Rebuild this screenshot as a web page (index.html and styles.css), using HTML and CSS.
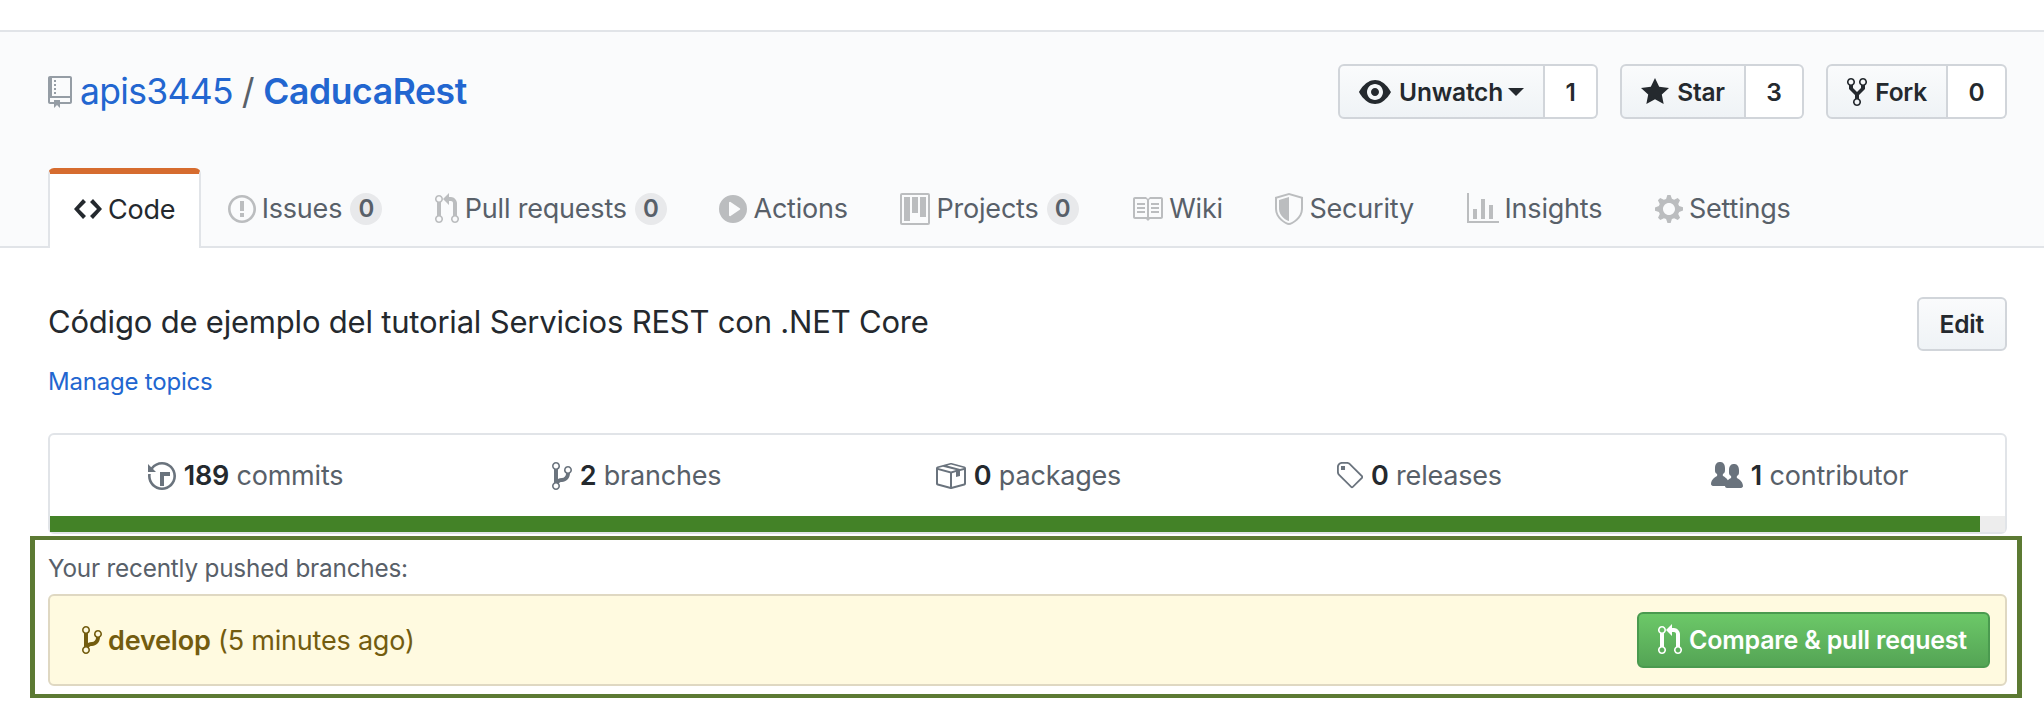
FILE: index.html
```html
<!DOCTYPE html>
<html>
  <head>
    <title>apis3445/CaducaRest</title>
    <link rel="stylesheet" href="styles.css">
  </head>

  <body>
    <div class="top-strip"></div>

    <div class="repohead">
      <div class="title-row">
        <h1 class="repo-title">
          <svg class="icon icon-repo" viewBox="0 0 12 16"><path d="M4 9H3V8h1v1zm0-3H3v1h1V6zm0-2H3v1h1V4zm0-2H3v1h1V2zm8-1v12c0 .55-.45 1-1 1H6v2l-1.5-1.5L3 16v-2H1c-.55 0-1-.45-1-1V1c0-.55.45-1 1-1h10c.55 0 1 .45 1 1zm-1 10H1v2h2v-1h3v1h5v-2zm0-10H2v9h9V1z"/></svg>
          <a class="owner" href="#">apis3445</a>
          <span class="slash">/</span>
          <a class="repo" href="#">CaducaRest</a>
        </h1>
        <div class="actions">
          <div class="btn-group">
            <button class="btn btn-main">
              <svg class="icon icon-16" viewBox="0 0 16 16"><path d="M8.06 2C3 2 0 8 0 8s3 6 8.06 6C13 14 16 8 16 8s-3-6-7.94-6zM8 12c-2.2 0-4-1.78-4-4 0-2.2 1.8-4 4-4 2.22 0 4 1.8 4 4 0 2.22-1.78 4-4 4zm2-4c0 1.11-.89 2-2 2-1.11 0-2-.89-2-2 0-1.11.89-2 2-2 1.11 0 2 .89 2 2z"/></svg>
              Unwatch <span class="caret"></span>
            </button>
            <a class="btn-count" href="#">1</a>
          </div>
          <div class="btn-group">
            <button class="btn btn-main">
              <svg class="icon icon-14" viewBox="0 0 14 16"><path d="M14 6l-4.9-.64L7 1 4.9 5.36 0 6l3.6 3.26L2.67 14 7 11.67 11.33 14l-.93-4.74L14 6z"/></svg>
              Star
            </button>
            <a class="btn-count" href="#">3</a>
          </div>
          <div class="btn-group">
            <button class="btn btn-main">
              <svg class="icon icon-10" viewBox="0 0 10 16"><path d="M8 1a1.993 1.993 0 00-1 3.72V6L5 8 3 6V4.72A1.993 1.993 0 002 1a1.993 1.993 0 00-1 3.72V6.5l3 3v1.78A1.993 1.993 0 005 15a1.993 1.993 0 001-3.72V9.5l3-3V4.72A1.993 1.993 0 008 1zM2 4.2C1.34 4.2.8 3.65.8 3c0-.65.55-1.2 1.2-1.2.65 0 1.2.55 1.2 1.2 0 .65-.55 1.2-1.2 1.2zm3 10c-.66 0-1.2-.55-1.2-1.2 0-.65.55-1.2 1.2-1.2.65 0 1.2.55 1.2 1.2 0 .65-.55 1.2-1.2 1.2zm3-10c-.66 0-1.2-.55-1.2-1.2 0-.65.55-1.2 1.2-1.2.65 0 1.2.55 1.2 1.2 0 .65-.55 1.2-1.2 1.2z"/></svg>
              Fork
            </button>
            <a class="btn-count" href="#">0</a>
          </div>
        </div>
      </div>

      <nav class="tabs">
        <a class="tab selected" href="#">
          <svg class="icon icon-14 tab-icon" viewBox="0 0 14 16"><path d="M9.5 3L8 4.5 11.5 8 8 11.5 9.5 13 14 8 9.5 3zm-5 0L0 8l4.5 5L6 11.5 2.5 8 6 4.5 4.5 3z"/></svg>
          Code
        </a>
        <a class="tab" href="#">
          <svg class="icon icon-14 tab-icon" viewBox="0 0 14 16"><path d="M7 2.3c3.14 0 5.7 2.56 5.7 5.7s-2.56 5.7-5.7 5.7A5.71 5.71 0 011.3 8c0-3.14 2.56-5.7 5.7-5.7zM7 1C3.14 1 0 4.14 0 8s3.14 7 7 7 7-3.14 7-7-3.14-7-7-7zm1 3H6v5h2V4zm0 6H6v2h2v-2z"/></svg>
          Issues <span class="counter">0</span>
        </a>
        <a class="tab" href="#">
          <svg class="icon icon-12 tab-icon" viewBox="0 0 12 16"><path d="M11 11.28V5c-.03-.78-.34-1.47-.94-2.06C9.46 2.35 8.78 2.03 8 2H7V0L4 3l3 3V4h1c.27.02.48.11.69.31.21.2.3.42.31.69v6.28A1.993 1.993 0 0010 15a1.993 1.993 0 001-3.72zm-1 2.92c-.66 0-1.2-.55-1.2-1.2 0-.65.55-1.2 1.2-1.2.65 0 1.2.55 1.2 1.2 0 .65-.55 1.2-1.2 1.2zM4 3c0-1.11-.89-2-2-2a1.993 1.993 0 00-1 3.72v6.56A1.993 1.993 0 002 15a1.993 1.993 0 001-3.72V4.72c.59-.34 1-.98 1-1.72zm-.8 10c0 .66-.55 1.2-1.2 1.2-.65 0-1.2-.55-1.2-1.2 0-.65.55-1.2 1.2-1.2.65 0 1.2.55 1.2 1.2zM2 4.2C1.34 4.2.8 3.65.8 3c0-.65.55-1.2 1.2-1.2.65 0 1.2.55 1.2 1.2 0 .65-.55 1.2-1.2 1.2z"/></svg>
          Pull requests <span class="counter">0</span>
        </a>
        <a class="tab" href="#">
          <svg class="icon icon-14 tab-icon" viewBox="0 0 14 16"><path d="M14 8A7 7 0 110 8a7 7 0 0114 0zm-8.223 3.482l4.599-3.066a.5.5 0 000-.832L5.777 4.518A.5.5 0 005 4.934v6.132a.5.5 0 00.777.416z"/></svg>
          Actions
        </a>
        <a class="tab" href="#">
          <svg class="icon icon-15 tab-icon" viewBox="0 0 15 16"><path d="M10 12h3V2h-3v10zm-4-2h3V2H6v8zm-4 4h3V2H2v12zm-1 1h13V1H1v14zM14 0H1a1 1 0 00-1 1v14a1 1 0 001 1h13a1 1 0 001-1V1a1 1 0 00-1-1z"/></svg>
          Projects <span class="counter">0</span>
        </a>
        <a class="tab" href="#">
          <svg class="icon icon-16 tab-icon" viewBox="0 0 16 16"><path d="M3 5h4v1H3V5zm0 3h4V7H3v1zm0 2h4V9H3v1zm11-5h-4v1h4V5zm0 2h-4v1h4V7zm0 2h-4v1h4V9zm2-6v9c0 .55-.45 1-1 1H9.5l-1 1-1-1H2c-.55 0-1-.45-1-1V3c0-.55.45-1 1-1h5.5l1 1 1-1H15c.55 0 1 .45 1 1zm-8 .5L7.5 3H2v9h6V3.5zm7-.5H9.5l-.5.5V12h6V3z"/></svg>
          Wiki
        </a>
        <a class="tab" href="#">
          <svg class="icon icon-14 tab-icon" viewBox="0 0 14 16"><path d="M0 2l7-2 7 2v6.02C14 12.69 8.69 16 7 16c-1.69 0-7-3.31-7-7.98V2zm1 .75L7 1l6 1.75v5.268C13 12.104 8.449 15 7 15c-1.449 0-6-2.896-6-6.982V2.75zm1 .75L7 2v12c-1.207 0-5-2.482-5-5.985V3.5z"/></svg>
          Security
        </a>
        <a class="tab" href="#">
          <svg class="icon icon-16 tab-icon" viewBox="0 0 16 16"><path d="M16 14v1H0V0h1v14h15zM5 13H3V8h2v5zm4 0H7V3h2v10zm4 0h-2V6h2v7z"/></svg>
          Insights
        </a>
        <a class="tab" href="#">
          <svg class="icon icon-14 tab-icon" viewBox="0 0 14 16"><path d="M14 8.77v-1.6l-1.94-.64-.45-1.09.88-1.84-1.13-1.13-1.81.91-1.09-.45-.69-1.92h-1.6l-.63 1.94-1.11.45-1.84-.88-1.13 1.13.91 1.81-.45 1.09L0 7.23v1.59l1.94.64.45 1.09-.88 1.84 1.13 1.13 1.81-.91 1.09.45.69 1.92h1.59l.63-1.94 1.11-.45 1.84.88 1.13-1.13-.92-1.81.47-1.09L14 8.75v.02zM7 11c-1.66 0-3-1.34-3-3s1.34-3 3-3 3 1.34 3 3-1.34 3-3 3z"/></svg>
          Settings
        </a>
      </nav>
    </div>

    <div class="container">
      <div class="description">
        <span class="description-text">Código de ejemplo del tutorial Servicios REST con .NET Core</span>
        <button class="btn btn-edit">Edit</button>
      </div>
      <a class="manage-topics" href="#">Manage topics</a>

      <div class="stats-box">
        <ul class="stats">
          <li>
            <svg class="icon icon-14" viewBox="0 0 14 16"><path d="M8 13H6V6h5v2H8v5zM7 1C4.81 1 2.87 2.02 1.59 3.59L0 2v4h4L2.5 4.5C3.55 3.17 5.17 2.3 7 2.3c3.14 0 5.7 2.56 5.7 5.7s-2.56 5.7-5.7 5.7A5.71 5.71 0 011.3 8c0-.34.03-.67.09-1H.08C.03 7.33 0 7.66 0 8c0 3.86 3.14 7 7 7s7-3.14 7-7-3.14-7-7-7z"/></svg>
            <span><strong>189</strong> commits</span>
          </li>
          <li>
            <svg class="icon icon-10" viewBox="0 0 10 16"><path d="M10 5c0-1.11-.89-2-2-2a1.993 1.993 0 00-1 3.72v.3c-.02.52-.23.98-.63 1.38-.4.4-.86.61-1.38.63-.83.02-1.48.16-2 .45V4.72a1.993 1.993 0 00-1-3.72C.88 1 0 1.89 0 3a2 2 0 001 1.72v6.56c-.59.35-1 .99-1 1.72 0 1.11.89 2 2 2 1.11 0 2-.89 2-2 0-.53-.2-1-.53-1.36.09-.06.48-.41.59-.47.25-.11.56-.17.94-.17 1.05-.05 1.95-.45 2.75-1.25S8.95 7.77 9 6.73h-.02C9.59 6.37 10 5.73 10 5zM2 1.8c.66 0 1.2.55 1.2 1.2 0 .65-.55 1.2-1.2 1.2C1.35 4.2.8 3.65.8 3c0-.65.55-1.2 1.2-1.2zm0 12.41c-.66 0-1.2-.55-1.2-1.2 0-.65.55-1.2 1.2-1.2.65 0 1.2.55 1.2 1.2 0 .65-.55 1.2-1.2 1.2zm6-8c-.66 0-1.2-.55-1.2-1.2 0-.65.55-1.2 1.2-1.2.65 0 1.2.55 1.2 1.2 0 .65-.55 1.2-1.2 1.2z"/></svg>
            <span><strong>2</strong> branches</span>
          </li>
          <li>
            <svg class="icon icon-16" viewBox="0 0 16 16"><path d="M1 4.27v7.47c0 .45.3.84.75.97l6.5 1.73c.16.05.34.05.5 0l6.5-1.73c.45-.13.75-.52.75-.97V4.27c0-.45-.3-.84-.75-.97l-6.5-1.74a1.4 1.4 0 00-.5 0L1.75 3.3c-.45.13-.75.52-.75.97zm7 9.09l-6-1.59V5l6 1.61v6.75zM2 4l2.5-.67L11 5.06l-2.5.67L2 4zm13 7.77l-6 1.59V6.61l2-.55V8.5l2-.53V5.53L15 5v6.77zm-2-7.24L6.5 2.8l2-.53L15 4l-2 .53z"/></svg>
            <span><strong>0</strong> packages</span>
          </li>
          <li>
            <svg class="icon icon-14" viewBox="0 0 14 16"><path d="M7.73 1.73C7.26 1.26 6.62 1 5.96 1H3.5C2.13 1 1 2.13 1 3.5v2.47c0 .66.27 1.3.73 1.77l6.06 6.06c.39.39 1.02.39 1.41 0l4.59-4.59a.996.996 0 000-1.41L7.73 1.73zM2.38 7.09c-.31-.3-.47-.7-.47-1.13V3.5c0-.88.72-1.59 1.59-1.59h2.47c.42 0 .83.16 1.13.47l6.14 6.13-4.73 4.73-6.13-6.15zM3.01 3h2v2H3V3h.01z"/></svg>
            <span><strong>0</strong> releases</span>
          </li>
          <li>
            <svg class="icon icon-16" viewBox="0 0 16 16"><path d="M16 12.999c0 .439-.45 1-1 1H7.995c-.539 0-.994-.447-.995-.999H1c-.54 0-1-.561-1-1 0-2.634 3-4 3-4s.229-.409 0-1c-.841-.621-1.058-.59-1-3 .058-2.419 1.367-3 2.5-3s2.442.58 2.5 3c.058 2.41-.159 2.379-1 3-.229.59 0 1 0 1s1.549.711 2.42 2.088C9.196 9.369 10 8.999 10 8.999s.229-.409 0-1c-.841-.62-1.058-.59-1-3 .058-2.419 1.367-3 2.5-3s2.437.581 2.495 3c.059 2.41-.158 2.38-1 3-.229.59 0 1 0 1s3.005 1.366 3.005 4z"/></svg>
            <span><strong>1</strong> contributor</span>
          </li>
        </ul>
        <div class="langbar">
          <span class="langbar-fill"></span>
        </div>
      </div>

      <div class="recent-frame">
        <div class="recent-title">Your recently pushed branches:</div>
        <div class="recent-branch">
          <div class="branch-info">
            <svg class="icon icon-10" viewBox="0 0 10 16"><path d="M10 5c0-1.11-.89-2-2-2a1.993 1.993 0 00-1 3.72v.3c-.02.52-.23.98-.63 1.38-.4.4-.86.61-1.38.63-.83.02-1.48.16-2 .45V4.72a1.993 1.993 0 00-1-3.72C.88 1 0 1.89 0 3a2 2 0 001 1.72v6.56c-.59.35-1 .99-1 1.72 0 1.11.89 2 2 2 1.11 0 2-.89 2-2 0-.53-.2-1-.53-1.36.09-.06.48-.41.59-.47.25-.11.56-.17.94-.17 1.05-.05 1.95-.45 2.75-1.25S8.95 7.77 9 6.73h-.02C9.59 6.37 10 5.73 10 5zM2 1.8c.66 0 1.2.55 1.2 1.2 0 .65-.55 1.2-1.2 1.2C1.35 4.2.8 3.65.8 3c0-.65.55-1.2 1.2-1.2zm0 12.41c-.66 0-1.2-.55-1.2-1.2 0-.65.55-1.2 1.2-1.2.65 0 1.2.55 1.2 1.2 0 .65-.55 1.2-1.2 1.2zm6-8c-.66 0-1.2-.55-1.2-1.2 0-.65.55-1.2 1.2-1.2.65 0 1.2.55 1.2 1.2 0 .65-.55 1.2-1.2 1.2z"/></svg>
            <span><strong>develop</strong> (5 minutes ago)</span>
          </div>
          <button class="btn-compare">
            <svg class="icon icon-12" viewBox="0 0 12 16"><path d="M11 11.28V5c-.03-.78-.34-1.47-.94-2.06C9.46 2.35 8.78 2.03 8 2H7V0L4 3l3 3V4h1c.27.02.48.11.69.31.21.2.3.42.31.69v6.28A1.993 1.993 0 0010 15a1.993 1.993 0 001-3.72zm-1 2.92c-.66 0-1.2-.55-1.2-1.2 0-.65.55-1.2 1.2-1.2.65 0 1.2.55 1.2 1.2 0 .65-.55 1.2-1.2 1.2zM4 3c0-1.11-.89-2-2-2a1.993 1.993 0 00-1 3.72v6.56A1.993 1.993 0 002 15a1.993 1.993 0 001-3.72V4.72c.59-.34 1-.98 1-1.72zm-.8 10c0 .66-.55 1.2-1.2 1.2-.65 0-1.2-.55-1.2-1.2 0-.65.55-1.2 1.2-1.2.65 0 1.2.55 1.2 1.2zM2 4.2C1.34 4.2.8 3.65.8 3c0-.65.55-1.2 1.2-1.2.65 0 1.2.55 1.2 1.2 0 .65-.55 1.2-1.2 1.2z"/></svg>
            Compare &amp; pull request
          </button>
        </div>
      </div>
    </div>
  </body>
</html>
```

FILE: styles.css
```css
body {
  margin: 0;
  background-color: #fff;
  color: #24292e;
  font-family: Inter, "Liberation Sans", sans-serif;
  font-size: 27px;
  letter-spacing: -0.2px;
  overflow: hidden;
}
a {
  color: inherit;
  text-decoration: none;
}
button {
  font-family: inherit;
  letter-spacing: inherit;
}
.icon {
  height: 32px;
  fill: currentColor;
  fill-rule: evenodd;
  flex-shrink: 0;
}
.icon-10 { width: 20px; }
.icon-12 { width: 24px; }
.icon-14 { width: 28px; }
.icon-15 { width: 30px; }
.icon-16 { width: 32px; }
.icon-repo {
  width: 24px;
  color: #959da5;
}

.top-strip {
  height: 30px;
}
.repohead {
  padding: 32px 37px 0 48px;
  background-color: #fafbfc;
  border-top: 2px solid #e1e4e8;
  border-bottom: 2px solid #e1e4e8;
}
.title-row {
  display: flex;
  justify-content: space-between;
  align-items: center;
  height: 55px;
  margin-bottom: 49px;
}
.repo-title {
  display: flex;
  align-items: center;
  gap: 8px;
  margin: 0;
  font-size: 35.5px;
  font-weight: 400;
  letter-spacing: -0.4px;
  color: #2266d0;
}
.repo-title .owner {
  letter-spacing: -0.7px;
}
.repo-title .repo {
  font-weight: 600;
}
.slash {
  color: #586069;
  margin: 0 1px;
}
.actions {
  display: flex;
  gap: 22px;
}
.btn-group {
  display: flex;
  height: 55px;
  font-size: 24.5px;
  font-weight: 600;
}
.btn {
  display: flex;
  align-items: center;
  gap: 8px;
  padding: 0 19px;
  border: 2px solid #d1d5da;
  border-radius: 6px;
  background-image: linear-gradient(#fafbfc, #eff3f6);
  color: #24292e;
  font-size: 24.5px;
  font-weight: 600;
}
.btn-main {
  border-radius: 6px 0 0 6px;
}
.btn-count {
  display: flex;
  align-items: center;
  justify-content: center;
  padding: 0 20.5px;
  background-color: #fff;
  border: 2px solid #d1d5da;
  border-left: 0;
  border-radius: 0 6px 6px 0;
}
.caret {
  width: 0;
  height: 0;
  margin-left: -3px;
  border-top: 8px solid #24292e;
  border-left: 8px solid transparent;
  border-right: 8px solid transparent;
}

.tabs {
  display: flex;
  margin-bottom: -2px;
  height: 80px;
}
.tab {
  display: flex;
  align-items: center;
  gap: 6px;
  padding: 5px 26.3px 4px;
  color: #586069;
}
.tab-icon {
  color: #bbbdbf;
}
.tab.selected {
  padding: 0 24px 4px 24px;
  color: #24292e;
  background-color: #fff;
  border: 2px solid #e1e4e8;
  border-top: 6px solid #d66c2f;
  border-bottom: 0;
  border-radius: 6px 6px 0 0;
}
.tab.selected .tab-icon {
  color: #24292e;
}
.counter {
  display: inline-block;
  min-width: 32px;
  height: 32px;
  margin-left: 2px;
  line-height: 32px;
  text-align: center;
  background-color: rgba(27, 31, 35, .08);
  border-radius: 16px;
  font-size: 24px;
  font-weight: 600;
}

.container {
  padding: 0 37px 0 48px;
}
.description {
  display: flex;
  justify-content: space-between;
  align-items: center;
  padding-top: 49px;
}
.description-text {
  margin-bottom: 5px;
  font-size: 31px;
}
.btn-edit {
  height: 54px;
  padding: 0 21px;
}
.manage-topics {
  display: block;
  margin-top: 14px;
  font-size: 24px;
  line-height: 34px;
  color: #2266d0;
}

.stats-box {
  margin-top: 34px;
  background-color: #fff;
  border: 2px solid #e1e4e8;
  border-radius: 6px;
}
.stats {
  display: flex;
  height: 81px;
  margin: 0;
  padding: 0;
  list-style: none;
}
.stats li {
  flex: 1;
  display: flex;
  align-items: center;
  justify-content: center;
  gap: 8px;
  color: #586069;
}
.stats .icon {
  color: #6a737d;
}
.stats strong {
  color: #24292e;
  font-weight: 600;
}
.langbar {
  height: 16px;
  background-color: #ededed;
}
.langbar-fill {
  display: block;
  width: 1930px;
  height: 100%;
  background-color: #438227;
}

.recent-frame {
  margin: 2px -15px 0 -18px;
  padding: 11px 10px 8px 13px;
  border: solid #5c7a33;
  border-width: 4px 5px;
}
.recent-title {
  font-size: 24.3px;
  line-height: 34px;
  color: #586069;
  margin-bottom: 9px;
}
.recent-branch {
  display: flex;
  justify-content: space-between;
  align-items: center;
  padding: 16px 15px 16px 32px;
  background-color: #fffae0;
  border: 2px solid #dfd8c2;
  border-radius: 6px;
}
.branch-info {
  display: flex;
  align-items: center;
  gap: 6px;
  color: #735c0f;
}
.branch-info strong {
  font-weight: 600;
}
.btn-compare {
  display: flex;
  align-items: center;
  gap: 7px;
  height: 56px;
  padding: 0 21px 0 19px;
  color: #fff;
  font-size: 25px;
  font-weight: 600;
  background-image: linear-gradient(#6cc868, #54a455);
  border: 2px solid #4a9a4f;
  border-radius: 6px;
}
```
